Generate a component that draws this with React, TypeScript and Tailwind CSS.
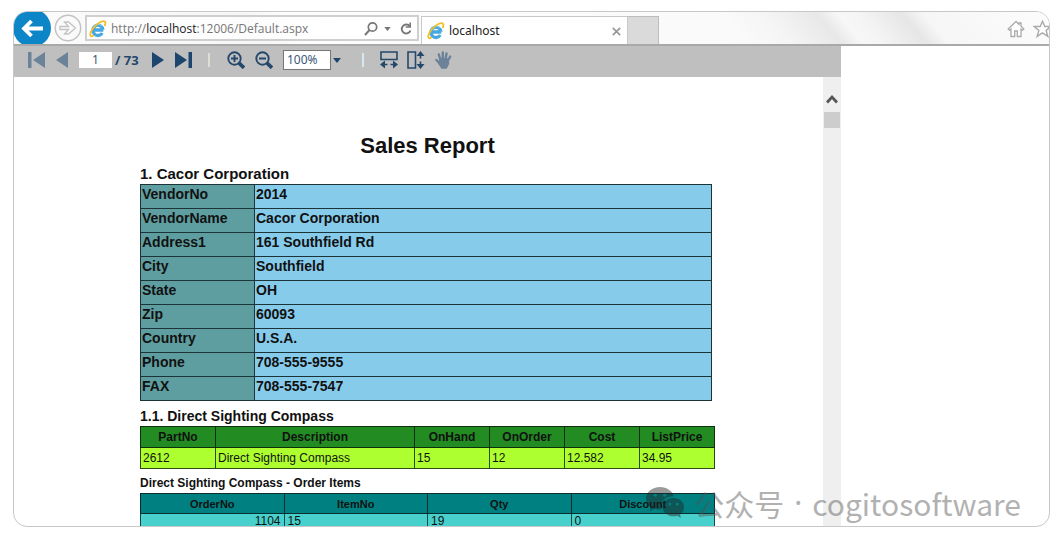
import React from "react";

const vendor = [
  ["VendorNo", "2014"],
  ["VendorName", "Cacor Corporation"],
  ["Address1", "161 Southfield Rd"],
  ["City", "Southfield"],
  ["State", "OH"],
  ["Zip", "60093"],
  ["Country", "U.S.A."],
  ["Phone", "708-555-9555"],
  ["FAX", "708-555-7547"],
];

const partColumns = ["PartNo", "Description", "OnHand", "OnOrder", "Cost", "ListPrice"];
const partRow = ["2612", "Direct Sighting Compass", "15", "12", "12.582", "34.95"];
const orderColumns = ["OrderNo", "ItemNo", "Qty", "Discount"];

function IeLogo() {
  return (
    <svg viewBox="0 0 18 18" className="h-[18px] w-[18px] shrink-0" aria-hidden="true">
      <path
        d="M4.500 10h9.800M13.900 9.800A5 5.200 0 1 0 13.200 13"
        fill="none"
        stroke="#45a8e0"
        strokeWidth="3.300"
      />
      <path d="M4.200 7.200a5.300 5.300 0 0 1 8.400-1.400" fill="none" stroke="#8fd3f5" strokeWidth="1" />
      <path
        d="M4 15.800C1 17.600.4 14.500 2.600 10.600 5 6.200 10.400 1.500 14.400 1.200c2.400-.1 2.400 2.200 1.400 4"
        fill="none"
        stroke="#f3bd27"
        strokeWidth="1.800"
        strokeLinecap="round"
      />
    </svg>
  );
}

function AddressBar() {
  return (
    <div className="flex h-[26px] w-[334px] items-center border-2 border-[#cfcfcf] bg-white/70 pt-[2px] pr-1 pl-[2px]">
      <IeLogo />
      <div
        role="textbox"
        aria-label="Address"
        contentEditable
        suppressContentEditableWarning
        className="ml-1 flex-1 font-['Open_Sans',sans-serif] text-xs whitespace-nowrap text-[#777] outline-none"
      >
        http://<span className="font-medium text-[#222]">localhost</span>:12006/Default.aspx
      </div>
      <button aria-label="Search" className="mr-[5px]">
        <svg viewBox="0 0 16 16" className="h-4 w-4" fill="none" stroke="#777" strokeWidth="1.700">
          <circle cx="9.500" cy="6" r="4.200" />
          <path d="M6.500 9 2 14" strokeWidth="2" />
        </svg>
      </button>
      <button aria-label="Address history" className="mr-2">
        <svg viewBox="0 0 8 5" className="h-1 w-[7px]" fill="#777">
          <path d="M0 0h8L4 5z" />
        </svg>
      </button>
      <button aria-label="Refresh">
        <svg viewBox="0 0 14 16" className="h-4 w-[14px]" fill="none" stroke="#777" strokeWidth="1.900">
          <path d="M10.800 5.200A4.500 4.500 0 1 0 11.500 9.500" />
          <path d="M11.200 1.500v4.500H6.700" strokeWidth="1.600" />
        </svg>
      </button>
    </div>
  );
}

function BrowserBar() {
  return (
    <header className="flex h-[34px] shrink-0 border-b-2 border-[#a9a9a9] bg-[linear-gradient(50deg,#fcfcfc_0%,#f6f6f6_24%,#fdfdfd_28%,#fafafa_69%,#f5f5f5_73%,#e8e8e8_78%,#f7f7f7_80%,#f4f4f4_82%,#e6e6e6_86%,#f6f6f6_88%,#fcfcfc_100%)]">
      <button aria-label="Back" className="h-8 w-[37px] shrink-0 overflow-hidden">
        <svg viewBox="0 0 37 32" className="h-8 w-[37px]">
          <circle cx="18" cy="16" r="19" fill="#0d86c8" />
          <path d="M29 16.500H10M17.500 9 10 16.500l7.500 7.500" fill="none" stroke="#fff" strokeWidth="3.800" />
        </svg>
      </button>
      <button aria-label="Forward" className="ml-[3px] self-center">
        <svg viewBox="0 0 28 28" className="h-7 w-7" fill="none" stroke="#c3c3c3">
          <circle cx="14" cy="14" r="12.700" strokeWidth="1.500" />
          <path d="M6 12.500h8.500l-4-4.500h4L21.500 14l-7 6h-4l4-4.500H6z" strokeWidth="1.300" />
        </svg>
      </button>
      <div className="ml-[3px] self-center">
        <AddressBar />
      </div>
      <div className="ml-[2px] flex h-7 w-[207px] items-center self-end border-x border-t border-[#c9c9c9] bg-white pr-[6px] pl-[5px] pt-px">
        <IeLogo />
        <span className="ml-1 flex-1 text-xs text-[#222]">localhost</span>
        <button aria-label="Close tab">
          <svg viewBox="0 0 9 9" className="h-[9px] w-[9px]" stroke="#999" strokeWidth="1.700">
            <path d="M.8.8l7.400 7.400M8.200.8.8 8.200" />
          </svg>
        </button>
      </div>
      <button aria-label="New tab" className="h-7 w-[31px] self-end border-t border-r border-[#bdbdbd] bg-[#dadada]" />
      <div className="-mr-1 ml-auto flex items-center gap-2 pt-[2px]">
        <button aria-label="Home">
          <svg viewBox="0 0 18 18" className="h-[18px] w-[18px]" fill="#fff" stroke="#aaa" strokeWidth="1.300">
            <path d="M9 1.500 1.200 9l1.200 1.200L4 9v7.500h3.700V11h2.600v5.500H14V9l1.600 1.200L16.800 9 14 6.200V3h-2v1.400z" />
          </svg>
        </button>
        <button aria-label="Favorites">
          <svg viewBox="0 0 20 18" className="h-[18px] w-5" fill="#fff" stroke="#aaa" strokeWidth="1.400">
            <path d="M9.500 1.200l2.300 5.300h6l-4.700 3.900 1.800 6-5.400-3.600-5.400 3.600 1.800-6L1.200 6.500h6z" />
          </svg>
        </button>
      </div>
    </header>
  );
}

function ZoomIcon({ plus }: { plus?: boolean }) {
  return (
    <svg viewBox="0 0 18 18" className="h-[18px] w-[18px]" fill="none" stroke="#24486b">
      <circle cx="7.500" cy="7.500" r="6.200" strokeWidth="1.900" />
      <path d="M12 12l5 4.800" strokeWidth="3.800" />
      <path d={plus ? "M4 7.500h7M7.500 4v7" : "M4 7.500h7"} strokeWidth="1.900" />
    </svg>
  );
}

function ReportToolbar() {
  return (
    <div className="flex h-[31px] items-center bg-[#bfbfbf] pb-[3px] pl-[14px] text-[#24486b]">
      <button aria-label="First page">
        <svg viewBox="0 0 17 16" className="h-4 w-[17px]" fill="#6c8299">
          <path d="M0 0h3.500v16H0zM17 0v16L5 8z" />
        </svg>
      </button>
      <button aria-label="Previous page" className="ml-[11px]">
        <svg viewBox="0 0 12 16" className="h-4 w-3" fill="#6c8299">
          <path d="M12 0v16L0 8z" />
        </svg>
      </button>
      <input
        aria-label="Page"
        defaultValue="1"
        className="ml-[11px] h-4 w-[33px] bg-white text-center text-xs text-[#3a5878] outline-none"
      />
      <span className="ml-[3px] w-[37px] text-[13px] leading-4 font-bold">/ 73</span>
      <button aria-label="Next page">
        <svg viewBox="0 0 12 16" className="h-4 w-3" fill="#1d466e">
          <path d="M0 0v16l12-8z" />
        </svg>
      </button>
      <button aria-label="Last page" className="ml-[11px]">
        <svg viewBox="0 0 17 16" className="h-4 w-[17px]" fill="#1d466e">
          <path d="M0 0v16l12-8zM13.500 0H17v16h-3.500z" />
        </svg>
      </button>
      <span className="ml-4 h-[14px] w-[2px] bg-[#e0dcd6]" />
      <button aria-label="Zoom in" className="ml-[17px]">
        <ZoomIcon plus />
      </button>
      <button aria-label="Zoom out" className="ml-[10px]">
        <ZoomIcon />
      </button>
      <select
        aria-label="Zoom level"
        defaultValue="100%"
        className="ml-[10px] h-5 w-12 appearance-none border border-[#777] bg-white pl-[3px] text-xs text-[#3a5878]"
      >
        <option>100%</option>
      </select>
      <svg viewBox="0 0 8 5" className="ml-[2px] h-[5px] w-2" fill="#1d466e">
        <path d="M0 0h8L4 5z" />
      </svg>
      <span className="ml-[21px] h-[14px] w-[2px] bg-[#d6e9f2]" />
      <button aria-label="Fit width" className="ml-4">
        <svg viewBox="0 0 18 18" className="h-[18px] w-[18px]" fill="none" stroke="#24486b" strokeWidth="1.600">
          <path d="M1 1h16v7.500H1zM3 13.500h4.500M10.500 13.500H15" />
          <path d="M0 13.500l5-4v8zM18 13.500l-5-4v8z" fill="#24486b" stroke="none" />
        </svg>
      </button>
      <button aria-label="Fit page" className="ml-[9px]">
        <svg viewBox="0 0 18 18" className="h-[18px] w-[18px]" fill="none" stroke="#24486b" strokeWidth="1.600">
          <path d="M1 1h7.500v16H1zM13.500 3v4.500M13.500 10.500V15" />
          <path d="M13.500 0l-4 5h8zM13.500 18l-4-5h8z" fill="#24486b" stroke="none" />
        </svg>
      </button>
      <button aria-label="Pan" className="ml-[10px]">
        <svg viewBox="0 0 17 18" className="h-[18px] w-[17px]" fill="none" stroke="#6c8299" strokeWidth="2.400" strokeLinecap="round">
          <path d="M5.500 9 3.800 3.500M7.800 8.500V1.500M10.500 8.500l1-6M12.500 10.500l2.700-5M5 13 1.400 9" />
          <path d="M5.300 8.500h7.400l.3 4-2 4H7L4.500 12.500z" fill="#6c8299" />
        </svg>
      </button>
    </div>
  );
}

function Report() {
  return (
    <article className="ml-[126px] w-[575px] shrink-0 pt-[55px] font-['Liberation_Sans',sans-serif] text-[#111]">
      <h1 className="text-center text-[22px] leading-7 font-bold">Sales Report</h1>
      <h2 className="mt-1 text-[15px] leading-5 font-bold">1. Cacor Corporation</h2>
      <table className="w-[572px] table-fixed border-collapse text-left text-sm leading-4 font-bold">
        <tbody>
          {vendor.map(([name, value]) => (
            <tr key={name} className="h-6 align-top">
              <th scope="row" className="w-[114px] border border-[#1c3438] bg-[#5f9ea0] pt-px pl-px">
                {name}
              </th>
              <td className="border border-[#1c3438] bg-[#87cbeb] pt-px pl-px">{value}</td>
            </tr>
          ))}
        </tbody>
      </table>
      <h3 className="mt-[5px] text-sm leading-5 font-bold">1.1. Direct Sighting Compass</h3>
      <table className="w-full table-fixed border-collapse text-xs leading-4">
        <colgroup>
          <col className="w-[75px]" />
          <col />
          <col className="w-[75px]" />
          <col className="w-[75px]" />
          <col className="w-[75px]" />
          <col className="w-[75px]" />
        </colgroup>
        <thead>
          <tr className="h-[21px] bg-[#228b22]">
            {partColumns.map((c) => (
              <th key={c} className="border border-[#0c300c]">
                {c}
              </th>
            ))}
          </tr>
        </thead>
        <tbody>
          <tr className="h-[21px] bg-[#adff2f]">
            {partRow.map((v) => (
              <td key={v} className="border border-[#2c4a12] pl-[2px]">
                {v}
              </td>
            ))}
          </tr>
        </tbody>
      </table>
      <h4 className="mt-1 text-xs leading-5 font-bold">Direct Sighting Compass - Order Items</h4>
      <table className="w-full table-fixed border-collapse text-xs leading-[14px]">
        <thead>
          <tr className="h-5 bg-[#008080] text-[11px]">
            {orderColumns.map((c) => (
              <th key={c} className="border border-[#0b2f2f]">
                {c}
              </th>
            ))}
          </tr>
        </thead>
        <tbody>
          <tr className="h-[21px] bg-[#48d1cc] align-top">
            <td className="border border-[#164a48] pr-[3px] text-right">1104</td>
            <td className="border border-[#164a48] pl-[3px]">15</td>
            <td className="border border-[#164a48] pl-[3px]">19</td>
            <td className="border border-[#164a48] pl-[3px]">0</td>
          </tr>
        </tbody>
      </table>
    </article>
  );
}

function Watermark() {
  return (
    <div className="absolute right-7 bottom-[3px] flex items-center gap-[10px] font-['Noto_Sans_CJK_SC',sans-serif] text-[30px] leading-10 text-[#555] opacity-45">
      <svg viewBox="0 0 38 32" className="h-8 w-[38px]" fill="#222">
        <path
          fillRule="evenodd"
          d="M14 0C6.300 0 0 5 0 11.500c0 3.600 2 6.600 5 8.700L3.800 24l4.700-2.300c1.700.5 3.500.8 5.500.8h1C13 15 19 9.500 27.700 9.300 26.500 4 20.800 0 14 0zM9.200 6.200a1.800 1.800 0 1 1 0 3.600 1.800 1.800 0 0 1 0-3.600zm9.600 0a1.800 1.800 0 1 1 0 3.600 1.800 1.800 0 0 1 0-3.600z"
        />
        <path
          fillRule="evenodd"
          d="M27.500 11C21.500 11 16.500 15 16.500 20s5 9.300 11 9.300c1.400 0 2.700-.2 3.900-.6L35 31l-1-3.300c2.500-1.700 4-4.500 4-7.700 0-5-4.700-9-10.500-9zM23.800 15.500a1.500 1.500 0 1 1 0 3 1.500 1.500 0 0 1 0-3zm7.500 0a1.500 1.500 0 1 1 0 3 1.500 1.500 0 0 1 0-3z"
        />
      </svg>
      <span>公众号</span>
      <span className="font-['Noto_Sans',sans-serif]">·</span>
      <span>cogitosoftware</span>
    </div>
  );
}

export default function App() {
  return (
    <div className="h-screen bg-white pt-[11px] pr-[5px] pb-[19px] pl-[13px] font-['Noto_Sans',sans-serif]">
      <div className="relative flex h-full flex-col overflow-hidden rounded-[14px] border border-[#c8c8c8] bg-white">
        <BrowserBar />
        <main className="flex min-h-0 w-4/5 max-w-[827px] flex-1 flex-col">
          <ReportToolbar />
          <div className="flex min-h-0 flex-1 overflow-hidden">
            <Report />
            <div className="ml-auto flex w-[18px] shrink-0 flex-col items-center gap-2 bg-[#efefef] pt-[17px]">
              <button aria-label="Scroll up">
                <svg viewBox="0 0 12 10" className="block h-[10px] w-3" fill="none" stroke="#555" strokeWidth="2.800">
                  <path d="M1 8.500 6 3l5 5.500" />
                </svg>
              </button>
              <div className="h-4 w-4 bg-[#cdcdcd]" />
            </div>
          </div>
        </main>
        <Watermark />
      </div>
    </div>
  );
}
